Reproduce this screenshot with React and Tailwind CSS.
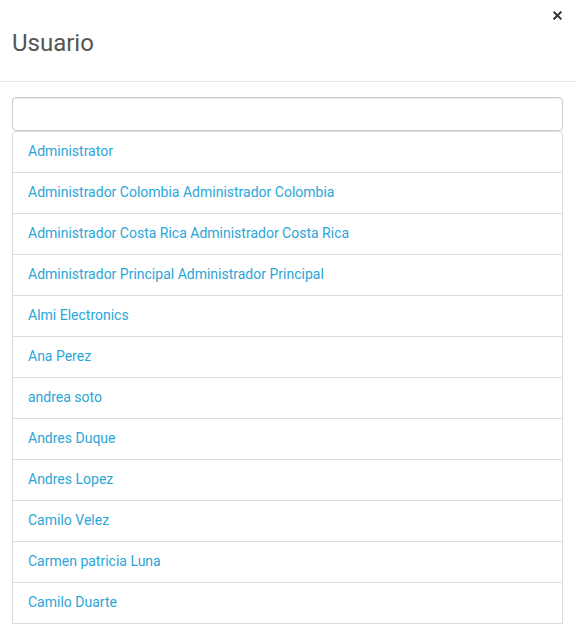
import React from "react";

const users = [
    "Administrator",
    "Administrador Colombia Administrador Colombia",
    "Administrador Costa Rica Administrador Costa Rica",
    "Administrador Principal Administrador Principal",
    "Almi Electronics",
    "Ana Perez",
    "andrea soto",
    "Andres Duque",
    "Andres Lopez",
    "Camilo Velez",
    "Carmen patricia Luna",
    "Camilo Duarte",
];

function App() {
    return (
        <div className="w-[576px] h-[625px] overflow-hidden bg-white" style={{ fontFamily: "Roboto, 'Liberation Sans', sans-serif" }}>
            <div className="relative h-[82px] border-b border-[#e5e5e5] pl-3 pt-[29px]">
                <h4 className="text-[24px] leading-[28px] text-[#555555]">Usuario</h4>
                <button className="absolute right-[14px] top-[11px] w-[9px] h-[9px]" aria-label="close">
                    <svg viewBox="0 0 10 10" width="9" height="9">
                        <path d="M1.5 1.5 L8.5 8.5 M8.5 1.5 L1.5 8.5" stroke="#333" strokeWidth="2.2" strokeLinecap="square" />
                    </svg>
                </button>
            </div>
            <div className="pt-[15px] pl-3 pr-[13px]">
                <input
                    type="text"
                    className="block w-full h-[34px] border border-[#cccccc] rounded-[4px] px-3 text-sm outline-none shadow-[inset_0_1px_1px_rgba(0,0,0,0.075)]"
                />
                <ul className="flex flex-col">
                    {users.map((u) => (
                        <li
                            key={u}
                            className="border border-[#dddddd] -mt-px first:mt-0 first:rounded-t-[4px] px-[15px] pt-[9px] pb-[11px] text-[14px] leading-[20px] text-[#2aa6d8]"
                        >
                            {u}
                        </li>
                    ))}
                </ul>
            </div>
        </div>
    );
}

export default App;
